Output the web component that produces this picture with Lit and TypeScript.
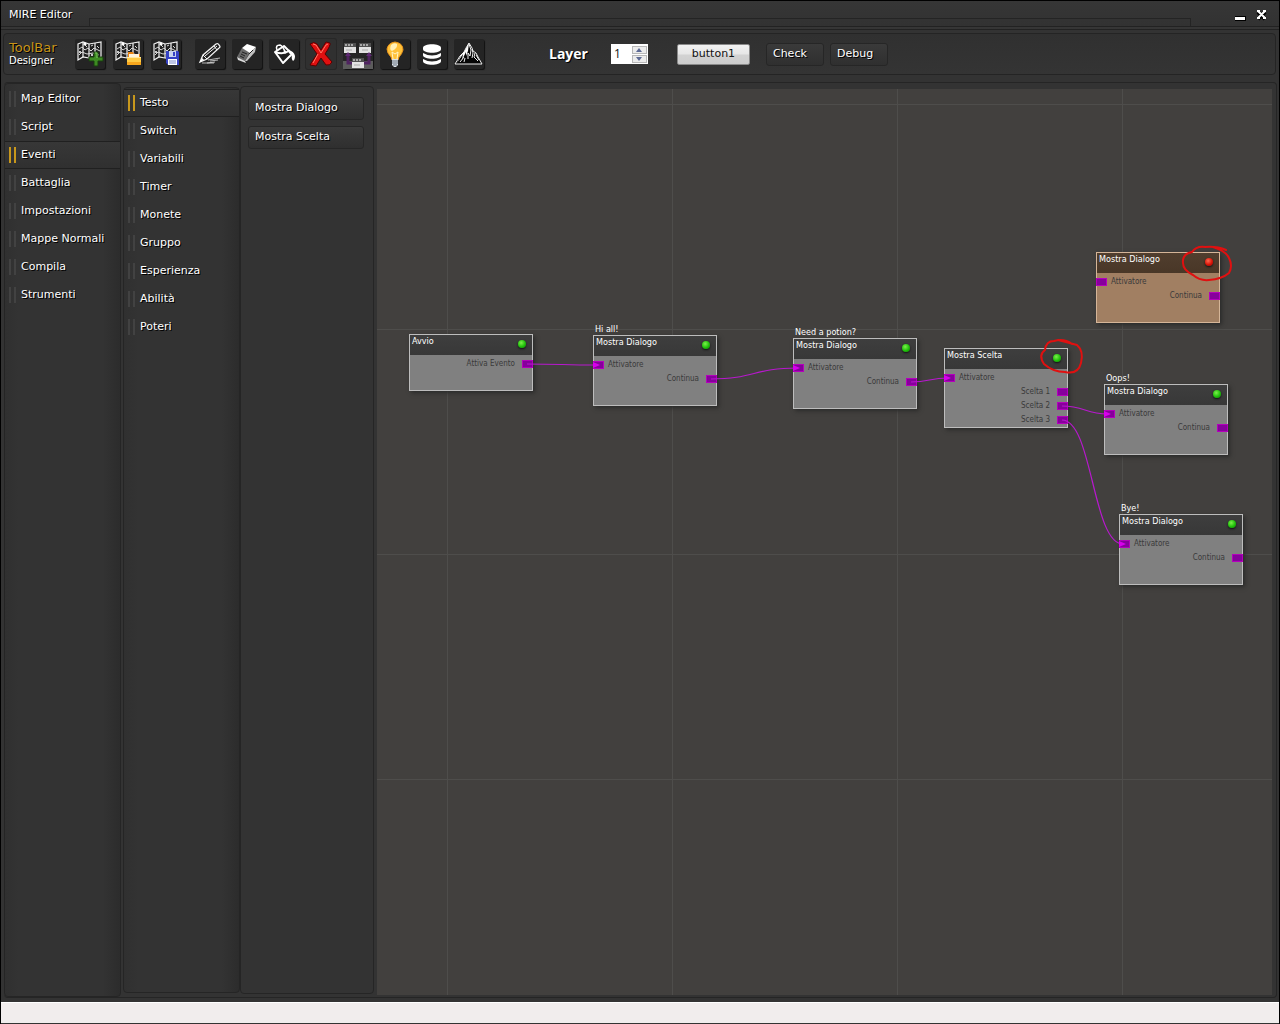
import { LitElement, html, svg, css, nothing, TemplateResult } from "lit";
import { customElement, property, state } from "lit/decorators.js";
import { classMap } from "lit/directives/class-map.js";

interface GraphNode {
  id: string;
  x: number;
  y: number;
  h: number;
  title: string;
  note?: string;
  input?: string;
  outputs: string[];
  failed?: boolean;
}

interface Link {
  from: string;
  output: number;
  to: string;
}

const NODE_WIDTH = 124;
const FIRST_ROW = 30;
const ROW = 14;

const NODES: GraphNode[] = [
  { id: "start", x: 32, y: 245, h: 57, title: "Avvio", outputs: ["Attiva Evento"] },
  { id: "hi", x: 216, y: 246, h: 71, title: "Mostra Dialogo", note: "Hi all!", input: "Attivatore", outputs: ["Continua"] },
  { id: "potion", x: 416, y: 249, h: 71, title: "Mostra Dialogo", note: "Need a potion?", input: "Attivatore", outputs: ["Continua"] },
  { id: "choice", x: 567, y: 259, h: 80, title: "Mostra Scelta", input: "Attivatore", outputs: ["Scelta 1", "Scelta 2", "Scelta 3"] },
  { id: "oops", x: 727, y: 295, h: 71, title: "Mostra Dialogo", note: "Oops!", input: "Attivatore", outputs: ["Continua"] },
  { id: "bye", x: 742, y: 425, h: 71, title: "Mostra Dialogo", note: "Bye!", input: "Attivatore", outputs: ["Continua"] },
  { id: "loose", x: 719, y: 163, h: 71, title: "Mostra Dialogo", input: "Attivatore", outputs: ["Continua"], failed: true },
];

const LINKS: Link[] = [
  { from: "start", output: 0, to: "hi" },
  { from: "hi", output: 0, to: "potion" },
  { from: "potion", output: 0, to: "choice" },
  { from: "choice", output: 1, to: "oops" },
  { from: "choice", output: 2, to: "bye" },
];

const SECTIONS = ["Map Editor", "Script", "Eventi", "Battaglia", "Impostazioni", "Mappe Normali", "Compila", "Strumenti"];
const GROUPS = ["Testo", "Switch", "Variabili", "Timer", "Monete", "Gruppo", "Esperienza", "Abilità", "Poteri"];

const mapShape = svg`
  <path d="M3 5 L8 3 L14 5 L20 4 L26 3 V18 L20 20 L14 19 L8 18 L3 21 Z" fill="#202020" stroke="#f2f2f2" stroke-width="1.2"/>
  <path d="M8 3 V18 M14 5 V19 M20 4 V20" stroke="#f2f2f2" stroke-width="1.2" fill="none"/>
  <path d="M4 10 L7 8 L10 11 L13 9 L16 12 L19 9 L25 12 M4 16 L7 13 L12 15 L18 14 L24 16 M10 6 L12 8 M16 7 L18 6 M22 7 L24 9" stroke="#d8d8d8" fill="none" stroke-width="1"/>
  <circle cx="10" cy="5" r="1.6" fill="#fff"/><circle cx="5" cy="13" r="1" fill="#fff"/><circle cx="17" cy="16" r="1" fill="#fff"/>`;

const ICONS: Record<string, TemplateResult> = {
  newMap: svg`${mapShape}
    <path d="M19 13h4v5h5v4h-5v5h-4v-5h-5v-4h5z" fill="#3d8b22" stroke="#193f0e"/>
    <path d="M20 14h2v5" fill="none" stroke="#7bc45c"/>`,
  openMap: svg`${mapShape}
    <path d="M15 13h5l1 2h6v4H15z" fill="#e98513"/><path d="M16 15h10v3H16z" fill="#fff4dc"/>
    <path d="M14 18h14v7q0 1-1 1H15q-1 0-1-1z" fill="#ffcb45"/><path d="M14 23h14v2q0 1-1 1H15q-1 0-1-1z" fill="#f7a61c"/><path d="M14 18.500h14" stroke="#ffe9a0"/>`,
  saveMap: svg`${mapShape}
    <path d="M15 12h12l1 1v13H17l-2-2z" fill="#3541c4"/><path d="M18 12h7v6h-7z" fill="#c9d4ee"/><path d="M22 13h2v4h-2z" fill="#3541c4"/>
    <path d="M17 20h9v6h-9z" fill="#fff"/><path d="M18 22h7M18 24h7" stroke="#7f8cc8"/>`,
  pencil: svg`
    <path d="M5 23 L8 16 L21 5 Q23 4 24 6 Q26 8 24 9 L12 20 Z" fill="#1c1c1c" stroke="#f4f4f4" stroke-width="1.300"/>
    <path d="M8 16 L12 20 M10 17 L22 7 M19 7 L22 11" stroke="#f4f4f4" fill="none"/>
    <path d="M5 23l2-4 2 2z" fill="#fff"/><path d="M7 24 H19 M13 21 L25 19 M15 22 L23 21 M12 24 L20 23" stroke="#ddd" fill="none" stroke-width=".8"/>`,
  eraser: svg`
    <path d="M5 18 L10 9 L18 13 L13 22 Z" fill="#6a6a6a"/><path d="M10 9 L15 5 L24 8 L18 14 Z" fill="#fff"/>
    <path d="M13 22 L18 14 L24 8 L23 13 L15 22 Z" fill="#c0c0c0"/><path d="M5 18 L13 22 L14 24 L6 21 Z" fill="#ddd"/>
    <path d="M8 17l4 2M9 15l4 2M10 13l5 2M17 15l4-4" stroke="#222" fill="none"/>`,
  bucket: svg`
    <path d="M6 13 L15 7 L23 15 L14 24 Z" fill="#202020" stroke="#fff" stroke-width="2" stroke-linejoin="round"/>
    <path d="M6 13 Q14 16 20 12 L22 15" fill="none" stroke="#fff" stroke-width="2"/>
    <path d="M8 11 Q6 6 11 6 Q14 7 16 13" fill="none" stroke="#fff" stroke-width="1.500"/><circle cx="16" cy="13" r="1.500" fill="#fff"/>
    <path d="M19 11 Q25 12 26 17 Q26 21 24 22 Q22 20 23 15 Z" fill="#fff"/>`,
  remove: svg`
    <path d="M4 5 Q8 2 11 5 L15 11 L20 3 L24 4 Q25 6 19 15 L26 23 Q24 27 20 26 L15 19 L10 27 L4 26 L11 15 Z" fill="#e01010" stroke="#580000"/>
    <path d="M7 5 L10 6 L15 14 L20 6 L22 5 M12 15 L7 24" stroke="#ff7a68" fill="none"/>`,
  nodes: svg`
    <path d="M0 0H30V30H0Z" fill="#252525"/><path d="M0 22H30V30H0Z" fill="#5c5c5c"/>
    <path d="M1 5h12v9H1zM16 5h12v9H16zM9 20h12v9H9z" fill="#e2e2e2"/>
    <path d="M1 4h12v4H1zM16 4h12v4H16zM9 19h12v4H9z" fill="#505050"/>
    <path d="M2 6h9M17 6h9M10 21h9" stroke="#fff" stroke-dasharray="2 1"/>
    <path d="M3 11h6M19 11h6M11 26h6" stroke="#aaa"/>
    <path d="M9 24 H5 V15 M21 24 H26 V15" stroke="#4f2360" fill="none" stroke-width="3"/><path d="M2 17l3-4 3 4zM23 17l3-4 3 4z" fill="#5f2a74"/>`,
  bulb: svg`
    <path d="M15 3 Q23 4 23 11 Q22 15 19 18 L18 21 H12 L11 18 Q7 14 7 10 Q8 4 15 3" fill="#ffc23b" stroke="#e8931b"/>
    <path d="M11 6 Q14 3 17 5 Q18 9 12 12 Q9 11 11 6" fill="#fff0b8"/><path d="M13 20 L12 13 L15 15 L18 13 L17 20" fill="none" stroke="#fff3c4"/>
    <path d="M12 20h6v6l-2 2h-2l-2-2z" fill="#dce3ea"/><path d="M12 22h6M12 24h6M13 26h4" stroke="#68737e"/>`,
  database: svg`
    <path d="M6 9c0-5 18-5 18 0v1c0 5-18 5-18 0z" fill="#fff"/>
    <path d="M6 14q9 5 18 0v2c0 5-18 5-18 0z" fill="#fff"/><path d="M6 20q9 5 18 0v2c0 5-18 5-18 0z" fill="#fff"/>`,
  mountain: svg`
    <path d="M1 25 L6 17 L10 13 L12 9 L15 4 L18 9 L19 12 L22 14 L24 18 L28 25 Z" fill="#050505" stroke="#eee"/>
    <path d="M15 4 L14 12 L12 17 L12 13 L8 21 L9 15 L3 24 L7 16 L10 13 Z" fill="#fff"/>
    <path d="M15 5 L17 11 L16 17 L14 14 L14 20 M18 10 L19 14 L18 19 M21 14 L20 18 L24 22 M22 16 L25 21 M10 18 L6 23 M11 19 L10 23" stroke="#eee" fill="none"/>`,
};

const TOOLS: { icon: string; label: string; flat?: boolean }[][] = [
  [
    { icon: "newMap", label: "Nuova mappa" },
    { icon: "openMap", label: "Apri mappa" },
    { icon: "saveMap", label: "Salva mappa" },
  ],
  [
    { icon: "pencil", label: "Matita" },
    { icon: "eraser", label: "Gomma" },
    { icon: "bucket", label: "Riempi" },
    { icon: "remove", label: "Elimina", flat: true },
    { icon: "nodes", label: "Eventi" },
    { icon: "bulb", label: "Luci" },
    { icon: "database", label: "Database" },
    { icon: "mountain", label: "Terreno" },
  ],
];

@customElement("side-tabs")
class SideTabs extends LitElement {
  @property({ type: Array }) items: string[] = [];
  @property() selected = "";

  static styles = css`
    :host {
      display: flex;
      flex-direction: column;
      box-sizing: border-box;
      padding-top: 1px;
      border: 1px solid #252525;
      border-radius: 4px;
      background: linear-gradient(90deg, #303030, #333 12%, #333 85%, #2c2c2c);
    }
    .tab {
      display: flex;
      align-items: center;
      gap: 5px;
      height: 28px;
      padding: 0 4px;
      border: 0;
      border-top: 1px solid transparent;
      border-bottom: 1px solid transparent;
      background: none;
      color: #fff;
      font: 11px/14px "DejaVu Sans", sans-serif;
      text-align: left;
      text-shadow: 1px 1px #000;
      white-space: nowrap;
    }
    .grip {
      box-sizing: border-box;
      flex: none;
      width: 7px;
      height: 16px;
      border: solid #424242;
      border-width: 0 2px;
    }
    .tab.on {
      border-top-color: #202020;
      border-bottom-color: #202020;
      background: linear-gradient(#373737, #303030);
    }
    .on .grip {
      border-color: #c7971c;
    }
  `;

  private pick(item: string) {
    this.selected = item;
  }

  render() {
    return this.items.map(
      (item) => html`<button class=${classMap({ tab: true, on: item === this.selected })} @click=${() => this.pick(item)}>
        <span class="grip"></span>${item}
      </button>`
    );
  }
}

@customElement("graph-node")
class GraphNodeView extends LitElement {
  @property({ attribute: false }) node!: GraphNode;

  static styles = css`
    :host {
      display: block;
      font: 9px/14px "DejaVu Sans Condensed", "DejaVu Sans", sans-serif;
    }
    .box {
      position: relative;
      box-sizing: border-box;
      height: 100%;
      border: 1px solid #bdbdbd;
      background: #808080;
      box-shadow: 2px 2px 4px #2a2a2a;
      color: #3a3a3a;
    }
    .note {
      position: absolute;
      bottom: 100%;
      left: 1px;
      color: #fff;
      white-space: nowrap;
    }
    .head {
      display: flex;
      justify-content: space-between;
      box-sizing: border-box;
      height: 20px;
      margin-bottom: 2px;
      padding: 0 6px 0 2px;
      background: linear-gradient(#3e3e3e, #383838);
      color: #fff;
      line-height: 12px;
    }
    .led {
      width: 8px;
      height: 8px;
      margin-top: 5px;
      border-radius: 50%;
      background: radial-gradient(circle at 40% 35%, #7bf04a, #1fbf0a 55%, #0c7a04);
      box-shadow: 0 1px 2px #111;
    }
    .row {
      display: flex;
      align-items: center;
      gap: 4px;
      height: 14px;
      margin: 0 -1px;
      font-size: 8px;
    }
    .out {
      justify-content: flex-end;
      gap: 7px;
    }
    .port {
      box-sizing: border-box;
      width: 11px;
      height: 8px;
      border: 1px solid #b400bc;
      background: #86009c;
    }
    .failed {
      border-color: #d5b598;
      background: #a17f62;
    }
    .failed .head {
      background: linear-gradient(#503e2e, #493727);
    }
    .failed .led {
      background: radial-gradient(circle at 40% 35%, #ff6a50, #d81408 55%, #860400);
    }
  `;

  render() {
    const n = this.node;
    return html`<div class=${classMap({ box: true, failed: !!n.failed })}>
      ${n.note ? html`<span class="note">${n.note}</span>` : nothing}
      <div class="head"><span>${n.title}</span><span class="led"></span></div>
      ${n.input ? html`<div class="row"><span class="port"></span><span>${n.input}</span></div>` : nothing}
      ${n.outputs.map((o) => html`<div class="row out"><span>${o}</span><span class="port"></span></div>`)}
    </div>`;
  }
}

@customElement("event-graph")
class EventGraph extends LitElement {
  static styles = css`
    :host {
      display: block;
      position: relative;
      overflow: hidden;
      background-color: #42403e;
      background-image: linear-gradient(90deg, #4e4d4b 1px, transparent 1px), linear-gradient(#4e4d4b 1px, transparent 1px);
      background-size: 225px 225px;
      background-position: 70px 15px;
    }
    .node {
      position: absolute;
    }
    .overlay {
      position: absolute;
      inset: 0;
      width: 100%;
      height: 100%;
      pointer-events: none;
      fill: none;
    }
    .wire {
      stroke: #b818ce;
      stroke-width: 1.2;
    }
    .tip {
      fill: #d800ec;
    }
    .mark {
      stroke: #e01010;
      stroke-width: 2;
      stroke-linecap: round;
      stroke-linejoin: round;
    }
  `;

  private wire(link: Link) {
    const a = NODES.find((n) => n.id === link.from)!;
    const b = NODES.find((n) => n.id === link.to)!;
    const row = (a.input ? 1 : 0) + link.output;
    const x1 = a.x + NODE_WIDTH - 6;
    const y1 = a.y + FIRST_ROW + row * ROW;
    const x2 = b.x + 4;
    const y2 = b.y + FIRST_ROW;
    const bend = (x2 - x1) / 2;
    return svg`<path class="wire" d="M${x1} ${y1} C${x1 + bend} ${y1} ${x2 - bend} ${y2} ${x2} ${y2}"/>
      <path class="tip" d="M${x2 - 4} ${y2 - 3} L${x2 + 3} ${y2} L${x2 - 4} ${y2 + 3} Z"/>`;
  }

  render() {
    return html`
      ${NODES.map(
        (n) => html`<graph-node
          class="node"
          .node=${n}
          style="left:${n.x}px;top:${n.y}px;width:${NODE_WIDTH}px;height:${n.h}px"
        ></graph-node>`
      )}
      <svg class="overlay" aria-hidden="true">
        ${LINKS.map((l) => this.wire(l))}
        <path class="mark" d="M849 161 Q840 157 828 158 Q819 157 815 163 Q805 165 806 174 Q806 181 816 186 Q823 192 832 191 Q845 190 852 184 Q856 177 852 169 Q849 162 836 158"/>
        <path class="mark" d="M695 255 Q687 249 677 252 Q669 252 668 261 Q661 266 667 275 Q676 283 688 283 Q701 286 704 274 Q707 262 700 256 Q689 253 681 251"/>
      </svg>
    `;
  }
}

@customElement("app-root")
class AppRoot extends LitElement {
  @state() private layer = 1;

  static styles = css`
    :host {
      display: flex;
      flex-direction: column;
      box-sizing: border-box;
      min-height: 100vh;
      border: solid #000;
      border-width: 1px 1px 0;
      background: #333;
      color: #fff;
      font: 11px/14px "DejaVu Sans", sans-serif;
    }
    button {
      font: inherit;
      color: inherit;
    }
    .titlebar {
      display: flex;
      align-items: center;
      gap: 17px;
      box-sizing: border-box;
      height: 29px;
      padding: 3px 12px 0 8px;
      border-bottom: 4px double #222;
      text-shadow: 1px 1px #000;
      background: linear-gradient(#363636, #323232);
    }
    .groove {
      box-sizing: border-box;
      flex: 1;
      align-self: flex-end;
      height: 8px;
      margin-right: 27px;
      border: 1px solid #242424;
      border-bottom: 0;
    }
    .winbtn {
      display: flex;
      width: 11px;
      height: 12px;
      padding: 0;
      border: 0;
      background: none;
    }
    .winbtns {
      display: flex;
      gap: 10px;
    }
    .toolbar {
      display: flex;
      align-items: center;
      box-sizing: border-box;
      height: 42px;
      margin: 3px 3px 7px 2px;
      padding: 0 5px;
      border: 1px solid #242424;
      border-radius: 4px;
      background: linear-gradient(#303030, #343434);
    }
    .brand {
      width: 66px;
      text-shadow: 1px 1px #000;
      font-size: 10px;
      line-height: 12px;
    }
    .brand strong {
      display: block;
      color: #c8941a;
      font-weight: normal;
      font-size: 13px;
      line-height: 14px;
    }
    .tools {
      display: flex;
      gap: 8px;
      margin-right: 14px;
    }
    .tools.tight {
      gap: 7px;
      margin-right: 65px;
    }
    .tool {
      width: 30px;
      height: 30px;
      padding: 0;
      border: 0;
      border-radius: 2px;
      background: #242424;
      box-shadow: 1px 1px 1px #111;
    }
    .tool.flat {
      background: #303030;
      box-shadow: 0 0 0 1px #272727;
    }
    .tool svg {
      display: block;
      width: 30px;
      height: 30px;
      fill: none;
    }
    .layer {
      display: flex;
      align-items: center;
      gap: 23px;
      margin-right: 29px;
      font: bold 14px/20px "Open Sans", sans-serif;
      text-shadow: 1px 1px #000;
    }
    .spin {
      display: flex;
      align-items: center;
      box-sizing: border-box;
      width: 37px;
      height: 20px;
      padding: 1px;
      background: #fff;
    }
    .number {
      appearance: textfield;
      box-sizing: border-box;
      min-width: 0;
      width: 20px;
      height: 18px;
      padding: 0 0 0 2px;
      border: 0;
      outline: 0;
      background: none;
      color: #111;
      font: 12px/18px "Open Sans", sans-serif;
    }
    .number::-webkit-inner-spin-button {
      display: none;
    }
    .arrows {
      display: flex;
      flex-direction: column;
      gap: 1px;
    }
    .arrow {
      display: flex;
      align-items: center;
      justify-content: center;
      box-sizing: border-box;
      width: 15px;
      height: 8px;
      padding: 0;
      border: 1px solid #b8b8b8;
      background: #ececec;
    }
    .arrow svg {
      width: 6px;
      height: 4px;
    }
    .native {
      width: 73px;
      height: 21px;
      margin-right: 16px;
      padding: 0 0 0 0;
      border: 1px solid #8a8a8a;
      border-radius: 2px;
      background: linear-gradient(#f2f2f2, #e6e6e6 48%, #d2d2d2 52%, #cdcdcd);
      color: #111;
    }
    .flatbtn {
      box-sizing: border-box;
      height: 23px;
      padding: 0 6px 1px;
      border: 1px solid #262626;
      border-radius: 3px;
      background: linear-gradient(#3a3a3a, #2f2f2f);
      text-align: left;
      text-shadow: 1px 1px #000;
    }
    .flatbtn.small {
      width: 58px;
      margin-right: 6px;
    }
    .work {
      display: grid;
      grid-template-columns: 117px 119px 134px 1fr;
      flex: 1;
      box-sizing: border-box;
      margin: 0 2px 4px 3px;
      border: 1px solid #252525;
      border-left: 0;
      border-radius: 4px;
    }
    .second {
      margin: 4px 0 4px 2px;
    }
    .commands {
      display: flex;
      flex-direction: column;
      gap: 6px;
      box-sizing: border-box;
      margin: 3px 0;
      padding: 10px 9px 10px 7px;
      border: 1px solid #252525;
      border-radius: 4px;
    }
    .graph {
      margin: 6px 4px 2px 3px;
    }
    .status {
      box-sizing: border-box;
      height: 22px;
      border-top: 1px solid #fff;
      border-bottom: 1px solid #333;
      background: #f1eded;
    }
  `;

  private step(by: number) {
    this.layer = Math.max(1, this.layer + by);
  }

  render() {
    return html`
      <header class="titlebar">
        <span>MIRE Editor</span>
        <span class="groove"></span>
        <span class="winbtns">
          <button class="winbtn" aria-label="Minimize">
            <svg width="11" height="12"><path d="M0 7h11v5H0z" fill="#000" /><path d="M0 8h10v3H0z" fill="#fff" /></svg>
          </button>
          <button class="winbtn" aria-label="Close">
            <svg width="11" height="12">
              <path d="M2 3 L9 10 M9 3 L2 10" stroke="#000" stroke-width="4" />
              <path d="M2 2 L9 9 M9 2 L2 9 M1 2h3M7 2h3M1 9h3M7 9h3" stroke="#fff" stroke-width="2" />
            </svg>
          </button>
        </span>
      </header>
      <div class="toolbar">
        <div class="brand"><strong>ToolBar</strong>Designer</div>
        ${TOOLS.map(
          (group, i) => html`<div class=${classMap({ tools: true, tight: i === 1 })}>
            ${group.map(
              (t) => html`<button class=${classMap({ tool: true, flat: !!t.flat })} aria-label=${t.label}>
                <svg viewBox="0 0 30 30">${ICONS[t.icon]}</svg>
              </button>`
            )}
          </div>`
        )}
        <div class="layer">
          <label for="layer">Layer</label>
          <span class="spin">
            <input
              class="number"
              id="layer"
              type="number"
              .value=${String(this.layer)}
              @change=${(e: Event) => (this.layer = Number((e.target as HTMLInputElement).value))}
            />
            <span class="arrows">
              <button class="arrow" aria-label="Up" @click=${() => this.step(1)}>
                <svg viewBox="0 0 6 4"><path d="M0 4L3 0L6 4z" fill="#5d6a94" /></svg>
              </button>
              <button class="arrow" aria-label="Down" @click=${() => this.step(-1)}>
                <svg viewBox="0 0 6 4"><path d="M0 0L3 4L6 0z" fill="#5d6a94" /></svg>
              </button>
            </span>
          </span>
        </div>
        <button class="native">button1</button>
        <button class="flatbtn small">Check</button>
        <button class="flatbtn small">Debug</button>
      </div>
      <main class="work">
        <side-tabs .items=${SECTIONS} selected="Eventi"></side-tabs>
        <side-tabs class="second" .items=${GROUPS} selected="Testo"></side-tabs>
        <section class="commands">
          <button class="flatbtn">Mostra Dialogo</button>
          <button class="flatbtn">Mostra Scelta</button>
        </section>
        <event-graph class="graph"></event-graph>
      </main>
      <footer class="status"></footer>
    `;
  }
}
